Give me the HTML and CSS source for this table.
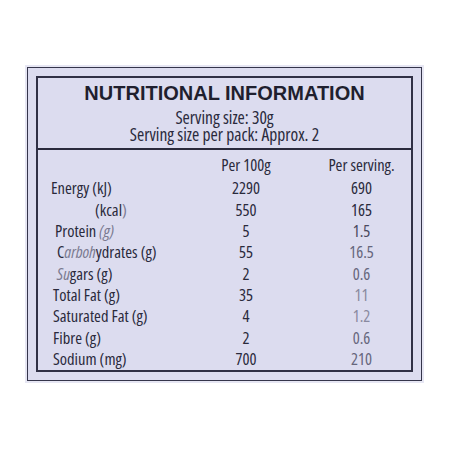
FILE: index.html
```html
<!DOCTYPE html>
<html>
<head>
<meta charset="utf-8">
<link rel="stylesheet" href="styles.css">
</head>
<body>
<div class="label">
  <div class="frame">
    <div class="panel">
      <h1 class="title">NUTRITIONAL INFORMATION</h1>
      <p class="serving">Serving size: 30g
Serving size per pack: Approx. 2</p>
      <hr class="rule">
      <div class="facts">
        <div class="row head"><span class="name"></span><span class="v1">Per 100g</span><span class="v2">Per serving.</span></div>
        <div class="row"><span class="name i1">Energy (kJ)</span><span class="v1">2290</span><span class="v2">690</span></div>
        <div class="row"><span class="name i5">(kcal<span class="faint">)</span></span><span class="v1">550</span><span class="v2">165</span></div>
        <div class="row"><span class="name i2">Protein <span class="faint it">(g)</span></span><span class="v1">5</span><span class="v2 mid">1.5</span></div>
        <div class="row"><span class="name i3">C<span class="faint it">arboh</span>ydrates (g)</span><span class="v1">55</span><span class="v2 light">16.5</span></div>
        <div class="row"><span class="name i3"><span class="faint it">Su</span>gars (g)</span><span class="v1">2</span><span class="v2 light">0.6</span></div>
        <div class="row"><span class="name i4">Total Fat (g)</span><span class="v1">35</span><span class="v2 pale">11</span></div>
        <div class="row"><span class="name i4">Saturated Fat (g)</span><span class="v1">4</span><span class="v2 pale">1.2</span></div>
        <div class="row"><span class="name i4">Fibre (g)</span><span class="v1">2</span><span class="v2 light">0.6</span></div>
        <div class="row"><span class="name i4">Sodium (mg)</span><span class="v1">700</span><span class="v2 light">210</span></div>
      </div>
    </div>
  </div>
</div>
</body>
</html>
```
FILE: styles.css
```css
html, body {
  margin: 0;
  padding: 0;
  background: #ffffff;
}
body {
  padding: 65px 0 0 25px;
  color: #2a2a3c;
  font-family: "Open Sans", "Roboto Condensed", sans-serif;
  font-stretch: condensed;
}
.label {
  width: 395px;
  padding: 2px;
  background: #e6e6f3;
}
.frame {
  border: 1px solid #35354a;
  background: #dcdcef;
  padding: 8px;
}
.panel {
  border: 2px solid #303045;
  background: #dcdcef;
  padding: 0 0 2px 0;
}
.title {
  margin: 0;
  padding-top: 3px;
  font-family: "Liberation Sans", Arial, sans-serif;
  font-stretch: normal;
  font-weight: bold;
  font-size: 20px;
  line-height: 24px;
  text-align: center;
  color: #1f1f2e;
}
.serving {
  margin: 3.7px 0 0 0;
  font-size: 17.5px;
  line-height: 17px;
  text-align: center;
  white-space: pre-line;
}
.rule {
  margin: 5.3px 0 0 0;
  border: none;
  height: 2px;
  background: #2a2a3c;
}
.facts {
  display: flex;
  flex-direction: column;
  font-size: 16.5px;
  padding-top: 3.5px;
}
.row {
  display: grid;
  grid-template-columns: 150px 116px 1fr;
  align-items: center;
  height: 21.3px;
}
.row.head {
  height: 23px;
}
.v1 {
  text-align: center;
}
.v2 {
  text-align: center;
  padding-left: 8px;
}
.name {
  white-space: nowrap;
}
.i1 { padding-left: 13px; }
.i2 { padding-left: 17px; }
.i3 { padding-left: 19px; }
.i4 { padding-left: 15px; }
.i5 { padding-left: 57px; }
.faint { color: #7a7a90; }
.it { font-style: italic; }
.mid { color: #4a4a60; }
.light { color: #66667c; }
.pale { color: #8a8aa0; }
```
